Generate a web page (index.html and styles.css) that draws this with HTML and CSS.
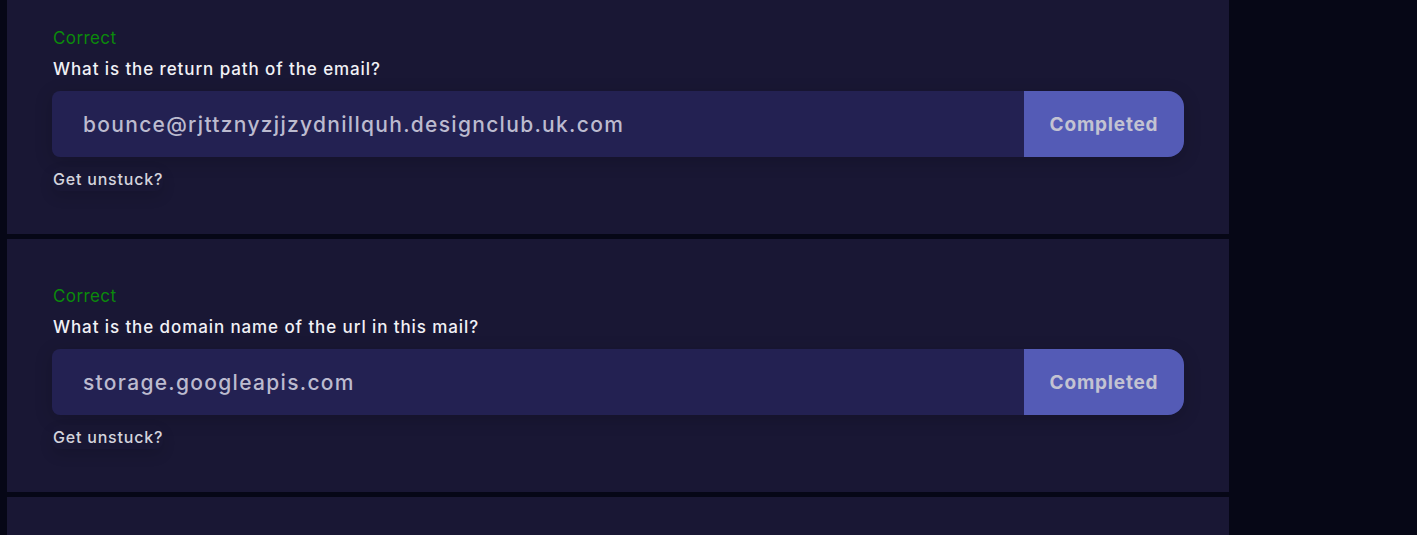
FILE: index.html
```html
<!DOCTYPE html>
<html lang="en">
<head>
<meta charset="utf-8">
<title>Questions</title>
<link rel="stylesheet" href="styles.css">
</head>
<body>
<main class="column">
  <section class="card">
    <div class="status">Correct</div>
    <div class="question">What is the return path of the email?</div>
    <div class="answer-row">
      <div class="answer">bounce@rjttznyzjjzydnillquh.designclub.uk.com</div>
      <button class="done">Completed</button>
    </div>
    <button class="unstuck">Get unstuck?</button>
  </section>
  <section class="card">
    <div class="status">Correct</div>
    <div class="question">What is the domain name of the url in this mail?</div>
    <div class="answer-row">
      <div class="answer">storage.googleapis.com</div>
      <button class="done">Completed</button>
    </div>
    <button class="unstuck">Get unstuck?</button>
  </section>
  <section class="card"></section>
</main>
</body>
</html>
```
FILE: styles.css
```css
html, body {
  margin: 0;
  padding: 0;
  height: 100%;
  overflow: hidden;
}
body {
  background: #060716;
  font-family: Inter, "Noto Sans", sans-serif;
}
.column {
  width: 1222px;
  margin-left: 7px;
  margin-top: -19px;
  display: flex;
  flex-direction: column;
  gap: 5px;
}
.card {
  background: #191734;
  height: 253px;
  box-sizing: border-box;
  padding: 45px 45px 0 45px;
  display: flex;
  flex-direction: column;
  align-items: flex-start;
}
.status {
  color: #0b8a0b;
  font-size: 17px;
  line-height: 24px;
  letter-spacing: 0.4px;
  padding-left: 1px;
}
.question {
  color: #f1f1f6;
  font-size: 17px;
  font-weight: 500;
  line-height: 24px;
  letter-spacing: 0.9px;
  margin-top: 7px;
  padding-left: 1px;
}
.answer-row {
  margin-top: 10px;
  display: flex;
  width: 1132px;
  height: 66px;
  border-radius: 8px 16px 16px 8px;
  box-shadow: 0 4px 18px rgba(0, 0, 0, 0.18);
}
.answer {
  flex: 1;
  background: #232152;
  border-radius: 8px 0 0 8px;
  color: #bcbbcf;
  font-size: 21px;
  font-weight: 500;
  letter-spacing: 1.3px;
  display: flex;
  align-items: center;
  padding-left: 31px;
}
.done {
  width: 160px;
  border: 0;
  background: #545bb6;
  border-radius: 0 16px 16px 0;
  color: #c3c3d2;
  font-family: inherit;
  font-size: 19px;
  font-weight: 700;
  letter-spacing: 0.8px;
  padding: 0;
}
.unstuck {
  margin-top: 10px;
  background: transparent;
  border: 0;
  padding: 2px 0 2px 1px;
  color: #d4d4dd;
  font-family: inherit;
  font-size: 16px;
  font-weight: 500;
  line-height: 20px;
  letter-spacing: 0.8px;
  box-shadow: 0 6px 14px rgba(0, 0, 0, 0.12);
  border-radius: 8px;
}
```
